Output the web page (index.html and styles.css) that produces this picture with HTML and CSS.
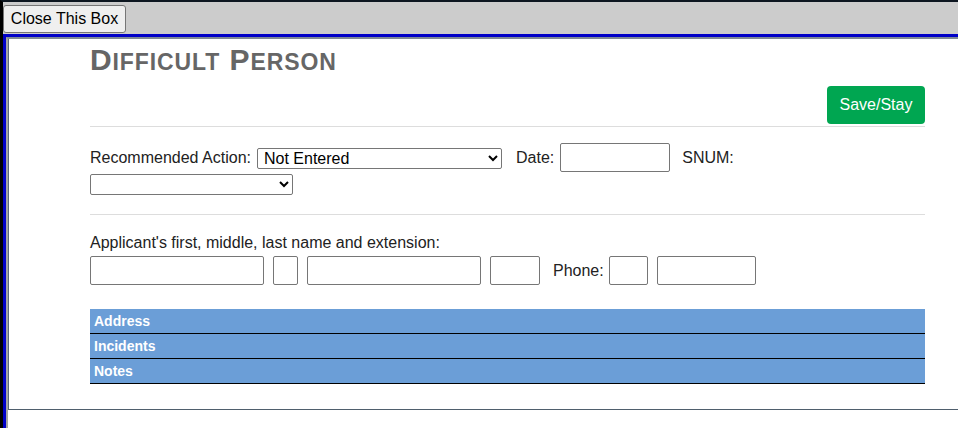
FILE: index.html
```html
<!DOCTYPE html>
<html lang="en">
<head>
    <meta charset="UTF-8">
    <meta name="viewport" content="width=device-width, initial-scale=1.0">
    <title>Difficult Person</title>
    <link rel="stylesheet" href="styles.css">
</head>
<body>
    <div class="shell">
        <div class="toolbar">
            <button class="close-btn" type="button">Close This Box</button>
        </div>

        <div class="frame">
            <div class="frame-inner">
                <div class="page">
                    <h1 class="title">D<span class="sc">ifficult</span> P<span class="sc">erson</span></h1>

                    <div class="actions">
                        <button class="save-btn" type="button">Save/Stay</button>
                    </div>

                    <hr class="divider">

                    <div class="row row-action">
                        <label class="field">Recommended Action:
                            <select class="select select-action">
                                <option>Not Entered</option>
                            </select>
                        </label>
                        <label class="field field-date">Date:
                            <input class="input input-date" type="text">
                        </label>
                        <label class="field field-snum">SNUM:</label>
                    </div>
                    <div class="row">
                        <select class="select select-snum">
                            <option></option>
                        </select>
                    </div>

                    <hr class="divider divider-2">

                    <p class="label-line">Applicant's first, middle, last name and extension:</p>
                    <div class="row name-row">
                        <input class="input w-174" type="text">
                        <input class="input w-25" type="text">
                        <input class="input w-174" type="text">
                        <input class="input w-50" type="text">
                        <label class="field field-phone">Phone:
                            <input class="input w-39" type="text">
                        </label>
                        <input class="input w-100" type="text">
                    </div>

                    <div class="sections">
                        <div class="section-bar">Address</div>
                        <div class="section-bar">Incidents</div>
                        <div class="section-bar">Notes</div>
                    </div>
                </div>
            </div>
        </div>
    </div>
</body>
</html>
```

FILE: styles.css
```css
:root {
    --bar: #6b9ed7;
    --green: #00a651;
    --text: #222222;
    --frame-blue: #0000c8;
}

* {
    box-sizing: border-box;
}

body {
    margin: 0;
    font-family: 'Liberation Sans', Arial, sans-serif;
    color: var(--text);
    background: #ffffff;
    overflow: hidden;
}

.shell {
    height: 100vh;
    border-top: 2px solid #0d1620;
    border-left: 3px solid #000000;
    display: flex;
    flex-direction: column;
}

.toolbar {
    background: #cccccc;
    height: 32px;
    padding-top: 3px;
}

.close-btn {
    font-family: 'Liberation Sans', Arial, sans-serif;
    font-size: 16px;
    height: 28px;
    width: 123px;
    padding: 0 6px;
    background: #efefef;
    color: #000000;
    border: 1px solid #767676;
    border-radius: 3px;
}

.frame {
    flex: 1;
    border-top: 3px solid var(--frame-blue);
    border-left: 3px solid var(--frame-blue);
}

.frame-inner {
    height: 100%;
    border-top: 2px solid #7f8a95;
    border-left: 2px solid #a3a3a3;
}

.page {
    border-left: 1px solid #5a6a78;
    border-bottom: 1px solid #4f5f6d;
    padding: 4px 33px 25px 81px;
}

.title {
    margin: 0;
    font-size: 30px;
    line-height: 34px;
    height: 34px;
    font-weight: bold;
    letter-spacing: 0.9px;
    color: #666666;
}

.title .sc {
    font-size: 23px;
    text-transform: uppercase;
}

.actions {
    display: flex;
    justify-content: flex-end;
    margin-top: 9px;
}

.save-btn {
    font-family: 'Liberation Sans', Arial, sans-serif;
    font-size: 16px;
    color: #ffffff;
    background: var(--green);
    border: none;
    border-radius: 4px;
    height: 38px;
    width: 98px;
    padding: 0;
}

.divider {
    margin: 2px 0 0;
    border: none;
    border-top: 1px solid #dddddd;
}

.divider-2 {
    margin-top: 19px;
}

.row {
    display: flex;
    align-items: center;
    font-size: 16px;
}

.row-action {
    margin-top: 16px;
}

.field {
    display: flex;
    align-items: center;
    gap: 6px;
    white-space: nowrap;
}

.field-date {
    margin-left: 14px;
}

.field-snum {
    margin-left: 12px;
}

.select {
    font-family: 'Liberation Sans', Arial, sans-serif;
    font-size: 16px;
    height: 21px;
    padding: 0 2px;
    color: #000000;
    background: #ffffff;
    border: 1px solid #767676;
    border-radius: 2px;
}

.select-action {
    width: 245px;
    margin-top: 1px;
}

.select-snum {
    width: 203px;
    margin-top: 2px;
}

.input {
    height: 29px;
    border: 1px solid #767676;
    border-radius: 2px;
    background: #ffffff;
}

.input-date {
    width: 110px;
}

.label-line {
    margin: 19px 0 4px;
    font-size: 16px;
}

.name-row {
    gap: 9px;
}

.field-phone {
    margin-left: 4px;
    gap: 5px;
}

.w-174 { width: 174px; }
.w-25 { width: 25px; }
.w-50 { width: 50px; }
.w-39 { width: 39px; }
.w-100 { width: 99px; }

.sections {
    margin-top: 24px;
}

.section-bar {
    background: var(--bar);
    color: #ffffff;
    font-size: 14px;
    font-weight: bold;
    height: 25px;
    line-height: 24px;
    padding-left: 4px;
    border-bottom: 1px solid #000000;
}
```
